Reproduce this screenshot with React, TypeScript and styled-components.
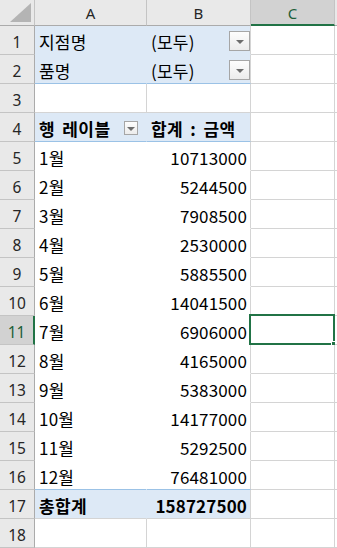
import React from "react";
import styled, { createGlobalStyle } from "styled-components";

const GRID = "#d4d4d4";
const HEAD_LINE = "#c4c4c4";
const BAND = "#dde9f6";
const BAND_LINE = "#9bc2e6";
const GREEN = "#217346";

const GlobalStyle = createGlobalStyle`
  html, body {
    margin: 0;
    padding: 0;
    background: #ffffff;
    overflow: hidden;
  }
  body {
    font-family: "Noto Sans CJK KR", "Noto Sans", sans-serif;
  }
`;

const Sheet = styled.div`
  display: grid;
  grid-template-columns: 35px 112px 104px 84px 1fr;
  grid-template-rows: 26px repeat(18, 29px);
  width: 337px;
  height: 548px;
  overflow: hidden;
`;

const Corner = styled.div`
  background: #e9e9e9;
  box-sizing: border-box;
  border-right: 1px solid ${HEAD_LINE};
  border-bottom: 1px solid #ababab;
  display: flex;
  align-items: flex-end;
  justify-content: flex-end;
  padding: 0 3px 3px 0;
`;

const ColHeader = styled.div<{ $selected?: boolean }>`
  box-sizing: border-box;
  background: ${(p) => (p.$selected ? "#d2d2d2" : "#e9e9e9")};
  border-right: 1px solid ${HEAD_LINE};
  border-bottom: ${(p) => (p.$selected ? `2px solid ${GREEN}` : "1px solid #ababab")};
  display: flex;
  align-items: center;
  justify-content: center;
  padding-top: ${(p) => (p.$selected ? "1px" : "0")};
  font-family: "Noto Sans", "Open Sans", sans-serif;
  font-size: 15px;
  color: ${(p) => (p.$selected ? "#1d5e38" : "#262626")};
`;

const RowHeader = styled.div<{ $selected?: boolean }>`
  box-sizing: border-box;
  background: ${(p) => (p.$selected ? "#d2d2d2" : "#e9e9e9")};
  border-right: ${(p) => (p.$selected ? `2px solid ${GREEN}` : `1px solid #ababab`)};
  border-bottom: 1px solid ${HEAD_LINE};
  display: flex;
  align-items: center;
  justify-content: center;
  padding-top: 3px;
  font-family: "Noto Sans", "Open Sans", sans-serif;
  font-size: 15.5px;
  color: ${(p) => (p.$selected ? "#1d5e38" : "#262626")};
`;

const Cell = styled.div<{
  $bg?: string;
  $right?: string;
  $bottom?: string;
  $align?: "left" | "right";
  $bold?: boolean;
  $selected?: boolean;
}>`
  position: relative;
  box-sizing: border-box;
  background: ${(p) => p.$bg ?? "#ffffff"};
  border-right: 1px solid ${(p) => p.$right ?? GRID};
  border-bottom: 1px solid ${(p) => p.$bottom ?? GRID};
  display: flex;
  align-items: center;
  justify-content: ${(p) => (p.$align === "right" ? "flex-end" : "space-between")};
  padding: 2px 3px 0 4px;
  font-size: 17px;
  font-weight: ${(p) => (p.$bold ? 700 : 400)};
  letter-spacing: ${(p) =>
    p.$align === "right" ? "0.15px" : p.$bold ? "0.4px" : "0.2px"};
  word-spacing: ${(p) => (p.$bold ? "3px" : "0")};
  color: #000000;
  white-space: nowrap;
  ${(p) =>
    p.$selected &&
    `
    &::before {
      content: "";
      position: absolute;
      left: -2px;
      top: -2px;
      right: -1px;
      bottom: -1px;
      border: 2px solid ${GREEN};
    }
    &::after {
      content: "";
      position: absolute;
      right: -4px;
      bottom: -4px;
      width: 5px;
      height: 5px;
      background: ${GREEN};
      border: 1px solid #ffffff;
    }
  `}
`;

const DropButton = styled.span<{ $small?: boolean }>`
  display: inline-flex;
  align-items: center;
  justify-content: center;
  box-sizing: border-box;
  width: ${(p) => (p.$small ? "14px" : "21px")};
  height: ${(p) => (p.$small ? "14px" : "20px")};
  margin-right: ${(p) => (p.$small ? "5px" : "-3px")};
  border: 1px solid #a6a6a6;
  background: linear-gradient(#fdfdfd, #ececec);

  &::after {
    content: "";
    border-left: 4px solid transparent;
    border-right: 4px solid transparent;
    border-top: 4px solid #6d6d6d;
    margin-top: 1px;
  }
`;

const months: [string, string][] = [
  ["1월", "10713000"],
  ["2월", "5244500"],
  ["3월", "7908500"],
  ["4월", "2530000"],
  ["5월", "5885500"],
  ["6월", "14041500"],
  ["7월", "6906000"],
  ["8월", "4165000"],
  ["9월", "5383000"],
  ["10월", "14177000"],
  ["11월", "5292500"],
  ["12월", "76481000"],
];

const Tail = () => <Cell $right="transparent" />;

export default function App() {
  return (
    <>
      <GlobalStyle />
      <Sheet>
        <Corner>
          <svg width="21" height="19" viewBox="0 0 21 19">
            <polygon points="21,0 21,19 0,19" fill="#b4b4b4" />
          </svg>
        </Corner>
        <ColHeader>A</ColHeader>
        <ColHeader>B</ColHeader>
        <ColHeader $selected>C</ColHeader>
        <ColHeader />

        <RowHeader>1</RowHeader>
        <Cell $bg={BAND} $right={BAND} $bottom={BAND}>지점명</Cell>
        <Cell $bg={BAND} $bottom={BAND}>
          (모두)
          <DropButton />
        </Cell>
        <Cell />
        <Tail />

        <RowHeader>2</RowHeader>
        <Cell $bg={BAND} $right={BAND} $bottom={BAND_LINE}>품명</Cell>
        <Cell $bg={BAND} $bottom={BAND_LINE}>
          (모두)
          <DropButton />
        </Cell>
        <Cell />
        <Tail />

        <RowHeader>3</RowHeader>
        <Cell />
        <Cell />
        <Cell />
        <Tail />

        <RowHeader>4</RowHeader>
        <Cell $bg={BAND} $right={BAND} $bottom={BAND_LINE} $bold>
          행 레이블
          <DropButton $small />
        </Cell>
        <Cell $bg={BAND} $bottom={BAND_LINE} $bold>
          합계 : 금액
        </Cell>
        <Cell />
        <Tail />

        {months.map(([m, v], i) => {
          const row = i + 5;
          const last = row === 16;
          return (
            <React.Fragment key={m}>
              <RowHeader $selected={row === 11}>{row}</RowHeader>
              <Cell $right="#ffffff" $bottom={last ? BAND_LINE : "#ffffff"}>
                {m}
              </Cell>
              <Cell $align="right" $bottom={last ? BAND_LINE : "#ffffff"}>
                {v}
              </Cell>
              <Cell $selected={row === 11} />
              <Tail />
            </React.Fragment>
          );
        })}

        <RowHeader>17</RowHeader>
        <Cell $bg={BAND} $right={BAND} $bold>
          총합계
        </Cell>
        <Cell $bg={BAND} $align="right" $bold>
          158727500
        </Cell>
        <Cell />
        <Tail />

        <RowHeader>18</RowHeader>
        <Cell />
        <Cell />
        <Cell />
        <Tail />
      </Sheet>
    </>
  );
}
